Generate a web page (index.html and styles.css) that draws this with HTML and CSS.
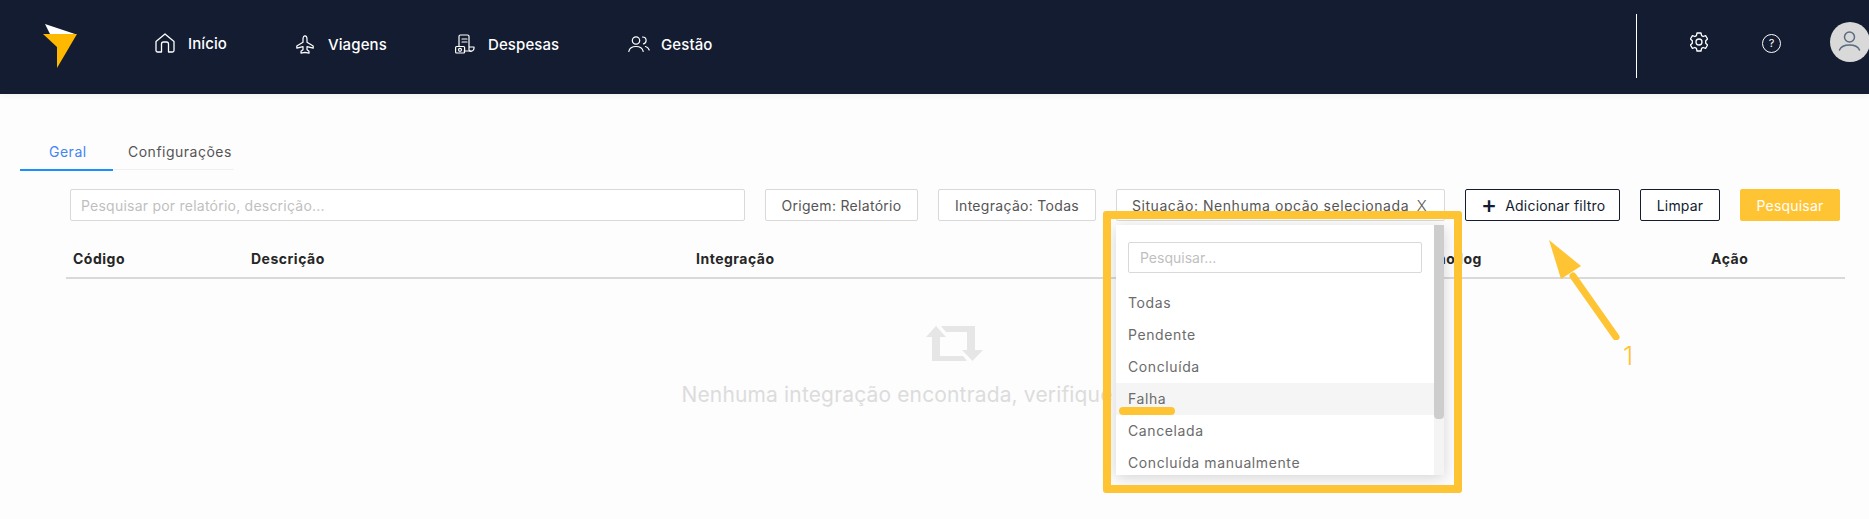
FILE: index.html
```html
<!DOCTYPE html>
<html lang="pt-BR">
<head>
<meta charset="utf-8">
<title>Integrações</title>
<link rel="stylesheet" href="styles.css">
</head>
<body>
<header class="topbar">
  <svg class="logo" width="34" height="44" viewBox="0 0 34 44">
    <polygon points="2,0 32,10 7,10" fill="#ffffff"/>
    <polygon points="0,10 34,10 14,44 14,23" fill="#ffb800"/>
  </svg>
  <nav class="nav">
    <a class="nav-item nav-home">
      <svg class="icon" width="20" height="20" viewBox="0 0 20 20" fill="none" stroke="#fff" stroke-width="1.3" stroke-linejoin="round"><path d="M1 8.500 10 1l9 7.500V17.500a1.500 1.500 0 0 1-1.500 1.500H13.500V11a2 2 0 0 0-2-2h-3a2 2 0 0 0-2 2v8H2.500A1.500 1.500 0 0 1 1 17.500z"/></svg>
      <span>Início</span>
    </a>
    <a class="nav-item nav-trips">
      <svg class="icon" width="18" height="19" viewBox="0 0 18 19" fill="none" stroke="#fff" stroke-width="1.2" stroke-linejoin="round"><path d="M9 .8c1.200 0 2 1.600 2 3.200v3.300l6.200 3.700v2.200L11 11.700v3.100l2 1.500v1.900l-4-.9-4 .9v-1.900l2-1.500v-3.100L.8 13.200V11L7 7.300V4c0-1.600.8-3.200 2-3.200z"/></svg>
      <span>Viagens</span>
    </a>
    <a class="nav-item nav-costs">
      <svg class="icon" width="20" height="20" viewBox="0 0 20 20" fill="none" stroke="#fff" stroke-width="1.2" stroke-linejoin="round" stroke-linecap="round"><path d="M4 12V2.500A1.500 1.500 0 0 1 5.500 1h7A1.500 1.500 0 0 1 14 2.500V15.500c0 1.200 1 1.800 2 1.800s3-.8 3-3v-1.300h-5"/><path d="M7 5h5M7 8h5M9 17h7"/><rect x=".6" y="12.500" width="9" height="6.500" rx="1"/><circle cx="5" cy="15.800" r="1.500"/></svg>
      <span>Despesas</span>
    </a>
    <a class="nav-item nav-admin">
      <svg class="icon" width="22" height="16" viewBox="0 0 22 16" fill="none" stroke="#fff" stroke-width="1.200" stroke-linecap="round"><circle cx="8" cy="4.500" r="3.700"/><path d="M.8 15.500C1.500 12 4 10.500 8 10.500s6.500 1.500 7.200 5"/><path d="M14.500 1c2.700 0 3.600 1.800 3.600 3.500s-1 3-2.600 3.400"/><path d="M17.500 10.500c1.800.5 3 1.800 3.700 3.500"/></svg>
      <span>Gestão</span>
    </a>
  </nav>
  <div class="tools">
    <span class="divider"></span>
    <svg class="tool-gear" width="18" height="20" viewBox="0 0 18 20" fill="none" stroke="#fff" stroke-width="1.300" stroke-linejoin="round"><path d="M7 1h4l.6 2.600 1.500.9 2.500-.8 2 3.300-1.900 1.800v2.400l1.900 1.800-2 3.300-2.500-.8-1.500.9L11 19H7l-.6-2.600-1.500-.9-2.500.8-2-3.300 1.900-1.800V8.800L.4 7l2-3.300 2.500.8 1.500-.9z"/><circle cx="9" cy="10" r="3"/></svg>
    <span class="tool-help">?</span>
    <span class="avatar">
      <svg width="24" height="24" viewBox="0 0 24 24" fill="none" stroke="#5b6b80" stroke-width="1.500" stroke-linecap="round"><circle cx="11.500" cy="7" r="5"/><path d="M1.500 20c1.500-3.500 5-5 10-5s8.500 1.500 10 5"/></svg>
    </span>
  </div>
</header>

<main class="page">
  <div class="tabs">
    <a class="tab tab-active">Geral</a>
    <a class="tab tab-plain">Configurações</a>
  </div>

  <div class="toolbar">
    <input class="field field-main" type="text" placeholder="Pesquisar por relatório, descrição...">
    <button class="chip chip-origin">Origem: Relatório</button>
    <button class="chip chip-integration">Integração: Todas</button>
    <button class="chip chip-status"><span class="chip-label">Situação: Nenhuma opção selecionada</span><span class="chip-x">X</span></button>
    <button class="btn btn-add"><span class="plus">+</span>Adicionar filtro</button>
    <button class="btn btn-clear">Limpar</button>
    <button class="btn btn-search">Pesquisar</button>
  </div>

  <section class="table">
    <div class="table-head">
      <span>Código</span>
      <span>Descrição</span>
      <span>Integração</span>
      <span>no log</span>
      <span>Ação</span>
    </div>
    <div class="empty">
      <svg class="empty-icon" width="57" height="35" viewBox="0 0 57 35" fill="#e6e6e6">
        <path d="M6 10h8v20h23l4 5H6z"/>
        <path d="M15 0h34v25h-8V6H20z"/>
        <path d="M0 11h20L10 0z"/>
        <path d="M36 24h21L46.500 35z"/>
      </svg>
      <p class="empty-text">Nenhuma integração encontrada, verifique seus filtros</p>
    </div>
  </section>
</main>

<div class="dropdown">
  <div class="dropdown-body">
    <input class="field field-drop" type="text" placeholder="Pesquisar...">
    <ul class="options">
      <li>Todas</li>
      <li>Pendente</li>
      <li>Concluída</li>
      <li class="option-hover">Falha</li>
      <li>Cancelada</li>
      <li>Concluída manualmente</li>
    </ul>
  </div>
  <div class="scroll"><div class="thumb"></div></div>
</div>

<div class="mark-box"></div>
<div class="mark-line"></div>
<svg class="mark-arrow" width="80" height="110" viewBox="0 0 80 110">
  <path d="M33 46 76 107" stroke="#ffc433" stroke-width="7" stroke-linecap="round" fill="none"/>
  <polygon points="9,10 41,36 21,49" fill="#ffc433"/>
</svg>
<span class="mark-num">1</span>
</body>
</html>
```

FILE: styles.css
```css
* { box-sizing: border-box; }
html, body { margin: 0; padding: 0; }
body {
  width: 1869px;
  height: 519px;
  overflow: hidden;
  position: relative;
  background: #fdfdfd;
  font-family: Inter, "Noto Sans", "Liberation Sans", sans-serif;
  font-size: 14px;
  color: #131c31;
}

/* top bar */
.topbar {
  height: 94px;
  background: #131c31;
  display: flex;
  align-items: flex-start;
  box-shadow: 0 2px 6px rgba(0, 0, 0, .05);
}
.logo { margin: 24px 0 0 43px; flex: none; }
.nav { display: flex; flex: none; margin: 33px 0 0 78px; }
.nav-item {
  display: flex;
  align-items: center;
  flex: none;
  height: 20px;
  color: #fff;
  font-size: 15px;
  font-weight: 500;
  letter-spacing: .1px;
}
.nav-item .icon { flex: none; }
.nav-home { width: 141px; gap: 13px; }
.nav-trips { width: 159px; gap: 14px; margin-top: 1px; }
.nav-costs { width: 173px; gap: 13px; margin-top: 1px; }
.nav-admin { gap: 11px; margin-top: 1px; }

.tools { margin-left: auto; display: flex; align-items: flex-start; flex: none; width: 233px; }
.divider { width: 1px; height: 64px; background: #fff; margin-top: 14px; flex: none; }
.tool-gear { margin: 32px 0 0 53px; flex: none; }
.tool-help {
  width: 19px;
  height: 19px;
  margin: 34px 0 0 54px;
  flex: none;
  border: 1px solid #fff;
  border-radius: 50%;
  color: #fff;
  font-size: 11px;
  line-height: 17px;
  text-align: center;
}
.avatar {
  width: 40px;
  height: 40px;
  margin: 22px 0 0 49px;
  flex: none;
  border-radius: 50%;
  background: #d9d9d9;
  display: flex;
  align-items: center;
  justify-content: center;
}

/* tabs */
.tabs { display: flex; margin: 37px 0 0 20px; width: 214px; height: 39px; border-bottom: 1px solid #f0f0f0; }
.tab { height: 40px; line-height: 42px; font-size: 14px; letter-spacing: .5px; }
.tab-active { width: 93px; padding-left: 29px; color: #4285f4; border-bottom: 2px solid #1890ff; }
.tab-plain { padding-left: 15px; color: #555; }

/* filters */
.toolbar { display: flex; gap: 20px; margin: 19px 0 0 70px; height: 32px; }
.field {
  height: 32px;
  border: 1px solid #d9d9d9;
  border-radius: 2px;
  background: #fff;
  font: inherit;
  font-size: 14px;
  outline: none;
}
.field::placeholder { color: #bfbfbf; opacity: 1; }
.field-main { width: 675px; padding: 0 10px; letter-spacing: .23px; }
.chip, .btn {
  height: 32px;
  padding: 0;
  border-radius: 2px;
  font: inherit;
  font-size: 14px;
  flex: none;
}
.chip { background: #fff; border: 1px solid #d9d9d9; color: #555; letter-spacing: .3px; }
.chip-origin { width: 153px; }
.chip-integration { width: 158px; }
.chip-status { width: 329px; display: flex; align-items: center; padding: 0 17px 0 15px; justify-content: space-between; }
.chip-label { letter-spacing: .55px; white-space: nowrap; }
.chip-x { font-size: 15px; font-weight: 300; }
.btn { border: 1px solid #131c31; background: #fff; color: #131c31; letter-spacing: .2px; }
.btn-add { width: 155px; display: flex; align-items: center; padding-left: 15px; }
.plus { font-size: 24px; line-height: 20px; margin-right: 8px; font-weight: 500; }
.btn-clear { width: 80px; }
.btn-search { width: 100px; background: #ffc433; border-color: #ffc433; color: #fff; }

/* table */
.table { margin: 0 24px 0 66px; }
.table-head {
  display: grid;
  grid-template-columns: 178px 445px 741px 274px 1fr;
  align-items: center;
  height: 58px;
  padding: 18px 0 0 7px;
  border-bottom: 2px solid #d9d9d9;
  font-weight: 700;
  font-size: 14px;
  letter-spacing: .5px;
  color: #262626;
}
.empty { display: flex; flex-direction: column; align-items: center; padding-top: 47px; }
.empty-icon { margin-right: 3px; }
.empty-text { margin: 19px 0 0; font-size: 21px; line-height: 30px; letter-spacing: .15px; color: #dcdcdc; white-space: nowrap; }

/* dropdown */
.dropdown {
  position: absolute;
  left: 1116px;
  top: 225px;
  width: 328px;
  height: 250px;
  display: flex;
  background: #fff;
  box-shadow: 0 3px 14px rgba(0, 0, 0, .16);
  overflow: hidden;
}
.dropdown-body { flex: 1; padding-top: 17px; }
.field-drop { display: block; width: 294px; height: 31px; margin-left: 12px; padding: 0 11px; }
.options { list-style: none; margin: 14px 0 0; padding: 0; color: #6b6b6b; font-size: 14px; letter-spacing: .6px; }
.options li { height: 32px; line-height: 32px; padding-left: 12px; white-space: nowrap; }
.option-hover { background: #f5f5f5; }
.scroll { width: 10px; background: #f4f4f4; }
.thumb { height: 194px; background: #cdcdcd; border-radius: 0 0 4px 4px; }

/* annotations */
.mark-box {
  position: absolute;
  left: 1103px;
  top: 211px;
  width: 359px;
  height: 282px;
  border: 8px solid #ffc433;
  border-radius: 3px;
}
.mark-line {
  position: absolute;
  left: 1119px;
  top: 407px;
  width: 56px;
  height: 8px;
  border-radius: 4px;
  background: #ffc433;
}
.mark-arrow { position: absolute; left: 1540px; top: 230px; }
.mark-num {
  position: absolute;
  left: 1623px;
  top: 341px;
  font-size: 26px;
  line-height: 30px;
  font-weight: 300;
  color: #ffc433;
}
```
